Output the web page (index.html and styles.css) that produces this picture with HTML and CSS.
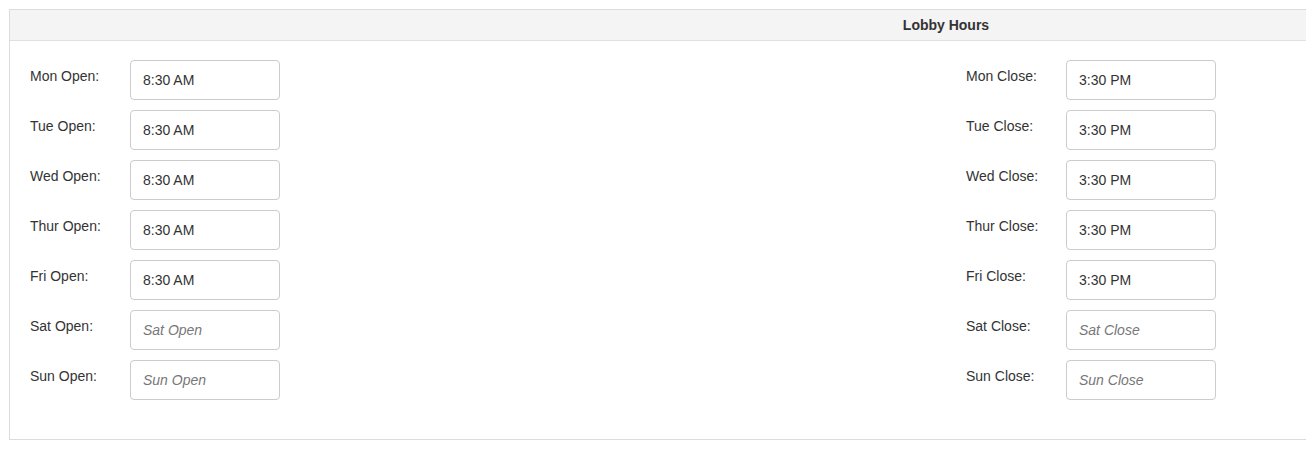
FILE: index.html
```html
<!DOCTYPE html>
<html lang="en">
<head>
<meta charset="utf-8">
<title>Lobby Hours</title>
<link rel="stylesheet" href="styles.css">
</head>
<body>
<div class="page">
  <section class="panel">
    <header class="panel-heading">Lobby Hours</header>
    <div class="panel-body">
      <div class="col">
        <div class="row"><label class="lbl">Mon Open:</label><input class="field" value="8:30 AM" placeholder="Mon Open"></div>
        <div class="row"><label class="lbl">Tue Open:</label><input class="field" value="8:30 AM" placeholder="Tue Open"></div>
        <div class="row"><label class="lbl">Wed Open:</label><input class="field" value="8:30 AM" placeholder="Wed Open"></div>
        <div class="row"><label class="lbl">Thur Open:</label><input class="field" value="8:30 AM" placeholder="Thur Open"></div>
        <div class="row"><label class="lbl">Fri Open:</label><input class="field" value="8:30 AM" placeholder="Fri Open"></div>
        <div class="row"><label class="lbl">Sat Open:</label><input class="field" value="" placeholder="Sat Open"></div>
        <div class="row"><label class="lbl">Sun Open:</label><input class="field" value="" placeholder="Sun Open"></div>
      </div>
      <div class="col">
        <div class="row"><label class="lbl">Mon Close:</label><input class="field" value="3:30 PM" placeholder="Mon Close"></div>
        <div class="row"><label class="lbl">Tue Close:</label><input class="field" value="3:30 PM" placeholder="Tue Close"></div>
        <div class="row"><label class="lbl">Wed Close:</label><input class="field" value="3:30 PM" placeholder="Wed Close"></div>
        <div class="row"><label class="lbl">Thur Close:</label><input class="field" value="3:30 PM" placeholder="Thur Close"></div>
        <div class="row"><label class="lbl">Fri Close:</label><input class="field" value="3:30 PM" placeholder="Fri Close"></div>
        <div class="row"><label class="lbl">Sat Close:</label><input class="field" value="" placeholder="Sat Close"></div>
        <div class="row"><label class="lbl">Sun Close:</label><input class="field" value="" placeholder="Sun Close"></div>
      </div>
    </div>
  </section>
</div>
</body>
</html>
```
FILE: styles.css
```css
html, body {
  margin: 0;
  padding: 0;
  overflow: hidden;
  background: #fff;
}
body {
  font-family: "Liberation Sans", Arial, sans-serif;
  font-size: 14px;
  line-height: 20px;
  color: #333;
}
.page {
  width: 1306px;
  box-sizing: border-box;
  padding: 9px 0 0 9px;
  overflow: hidden;
}
.panel {
  width: 1872px;
  border: 1px solid #dcdcdc;
  background: #fff;
}
.panel-heading {
  height: 31px;
  box-sizing: border-box;
  padding: 5px 0;
  background: #f4f4f4;
  border-bottom: 1px solid #e6dede;
  text-align: center;
  font-weight: bold;
  font-size: 14px;
  line-height: 20px;
  color: #333;
}
.panel-body {
  display: grid;
  grid-template-columns: 1fr 1fr;
  padding: 19px 0 39px;
}
.col {
  display: flex;
  flex-direction: column;
  gap: 10px;
  padding-left: 20px;
}
.row {
  display: flex;
  align-items: flex-start;
}
.lbl {
  width: 100px;
  padding-top: 6px;
  line-height: 20px;
  color: #333;
}
.field {
  width: 150px;
  height: 40px;
  box-sizing: border-box;
  margin: 0;
  padding: 0 12px;
  border: 1px solid #ccc;
  border-radius: 4px;
  font-family: "Liberation Sans", Arial, sans-serif;
  font-size: 14px;
  color: #333;
  background: #fff;
  outline: none;
}
.field::placeholder {
  color: #777;
  font-style: italic;
  opacity: 1;
}
```
